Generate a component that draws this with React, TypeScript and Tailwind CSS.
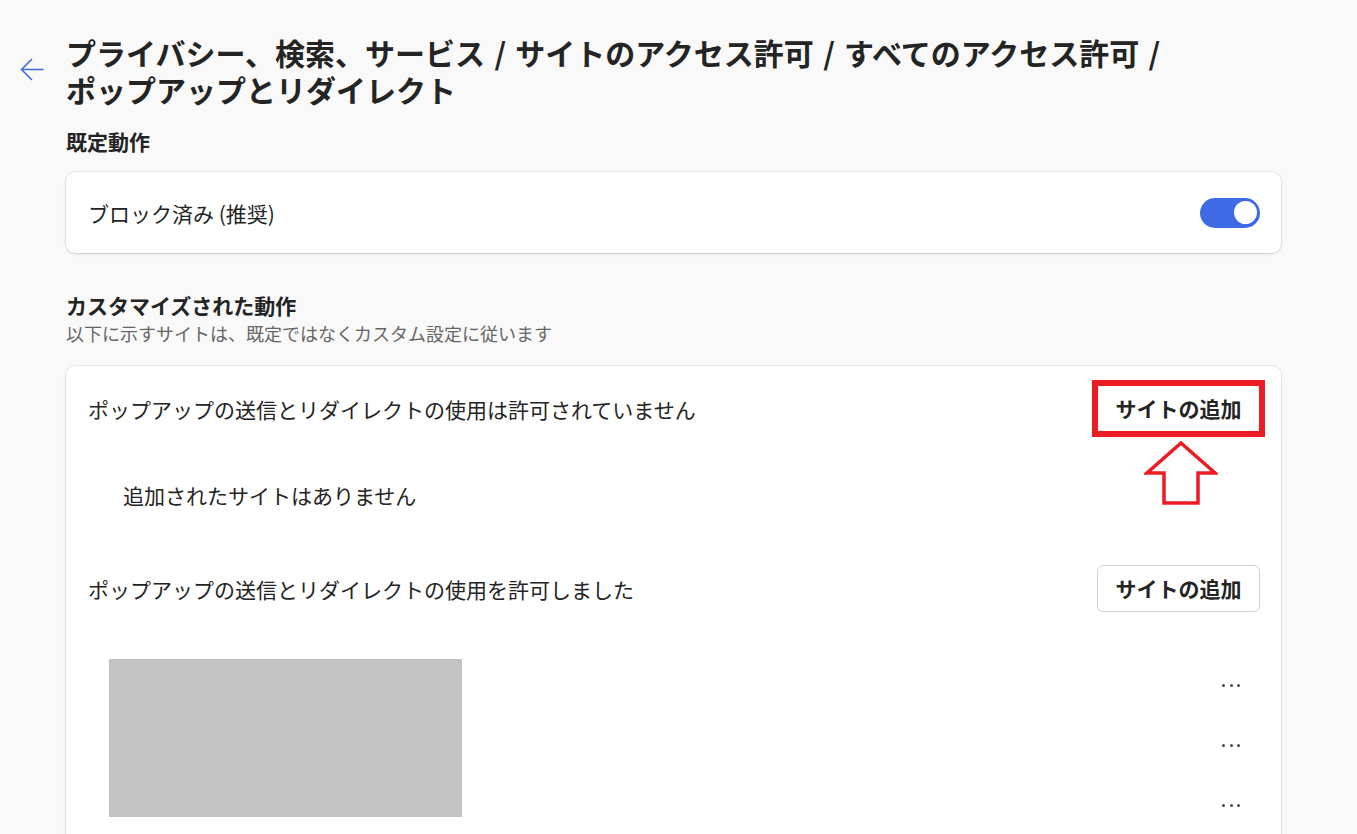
import type { ReactNode } from "react";

const FONT = {
  fontFamily: '"Noto Sans CJK JP", "Noto Sans", sans-serif',
};

function AddSiteButton({ highlight = false }: { highlight?: boolean }) {
  return (
    <div className="relative">
      <button className="h-[47px] w-[163px] rounded-[6px] border border-[#d1d1d1] bg-white text-[21px] font-bold text-[#242424]">
        サイトの追加
      </button>
      {highlight && (
        <>
          <span className="pointer-events-none absolute -inset-[5px] border-[6px] border-[#ed1c24]" />
          <svg
            className="pointer-events-none absolute left-[47px] top-[56px]"
            width="74"
            height="66"
            viewBox="0 0 74 66"
          >
            <polygon
              points="37,2 71,32 54,32 54,62 20,62 20,32 3,32"
              fill="white"
              stroke="#ed1c24"
              strokeWidth="3.5"
              strokeLinejoin="miter"
            />
          </svg>
        </>
      )}
    </div>
  );
}

function Card({ children, className = "" }: { children: ReactNode; className?: string }) {
  return (
    <div
      className={`rounded-[9px] bg-white shadow-[0_0_0_1px_rgba(0,0,0,0.05),0_1px_3px_rgba(0,0,0,0.12)] ${className}`}
    >
      {children}
    </div>
  );
}

function Dots() {
  return (
    <div className="flex items-center gap-[4.5px]">
      <span className="h-[3px] w-[3px] rounded-full bg-[#4a4a4a]" />
      <span className="h-[3px] w-[3px] rounded-full bg-[#4a4a4a]" />
      <span className="h-[3px] w-[3px] rounded-full bg-[#4a4a4a]" />
    </div>
  );
}

function Sep() {
  return <span className="px-[2.5px]"> / </span>;
}

export default function App() {
  return (
    <div
      className="h-[834px] w-full overflow-hidden bg-[#f9f9f9] text-[#242424]"
      style={FONT}
    >
      <div className="flex">
        {/* back */}
        <div className="w-[66px] shrink-0 pt-[58px] pl-[20px]">
          <svg width="24" height="23" viewBox="0 0 24 23" fill="none">
            <path
              d="M23 11.5H1.5M11.5 1.5L1.5 11.5L11.5 21.5"
              stroke="#3f6ae0"
              strokeWidth="1.6"
              strokeLinecap="round"
              strokeLinejoin="round"
            />
          </svg>
        </div>

        <div className="w-[1215px] shrink-0">
          <h1 className="mt-[34px] text-[30px] font-bold leading-[37px]">
            <span className="whitespace-nowrap">プライバシー、検索、サービス</span>
            <Sep />
            <span className="whitespace-nowrap">サイトのアクセス許可</span>
            <Sep />
            <span className="whitespace-nowrap">すべてのアクセス許可</span>
            <Sep />
            <span className="whitespace-nowrap">ポップアップとリダイレクト</span>
          </h1>

          <h2 className="mt-[19px] text-[21px] font-bold leading-[28px]">既定動作</h2>

          <Card className="mt-[17px] flex h-[81px] items-center justify-between pl-[22px] pr-[21px]">
            <span className="text-[21px] leading-[28px]">ブロック済み (推奨)</span>
            <div className="flex h-[30px] w-[60px] items-center justify-end rounded-full bg-[#4069e6] pr-[3px]">
              <span className="h-[23px] w-[23px] rounded-full bg-white" />
            </div>
          </Card>

          <h2 className="mt-[38px] text-[21px] font-bold leading-[28px]">
            カスタマイズされた動作
          </h2>
          <p className="mt-[1px] text-[18px] leading-[26px] text-[#666666]">
            以下に示すサイトは、既定ではなくカスタム設定に従います
          </p>

          <Card className="mt-[20px] h-[600px] pt-[19px] pl-[22px] pr-[21px]">
            <div className="flex h-[47px] items-center justify-between">
              <span className="text-[21px] leading-[28px]">
                ポップアップの送信とリダイレクトの使用は許可されていません
              </span>
              <AddSiteButton highlight />
            </div>

            <p className="mt-[48px] pl-[35px] text-[21px] leading-[30px]">
              追加されたサイトはありません
            </p>

            <div className="mt-[55px] flex h-[47px] items-center justify-between">
              <span className="text-[21px] leading-[28px]">
                ポップアップの送信とリダイレクトの使用を許可しました
              </span>
              <AddSiteButton />
            </div>

            <div className="relative mt-[43px]">
              {[0, 1, 2].map((i) => (
                <div key={i} className="flex h-[60px] items-center justify-end pr-[20px]">
                  <Dots />
                </div>
              ))}
              {/* redacted site names */}
              <div className="absolute left-[21px] top-[4px] h-[158px] w-[353px] bg-[#c3c3c3]" />
            </div>
          </Card>
        </div>
      </div>
    </div>
  );
}
